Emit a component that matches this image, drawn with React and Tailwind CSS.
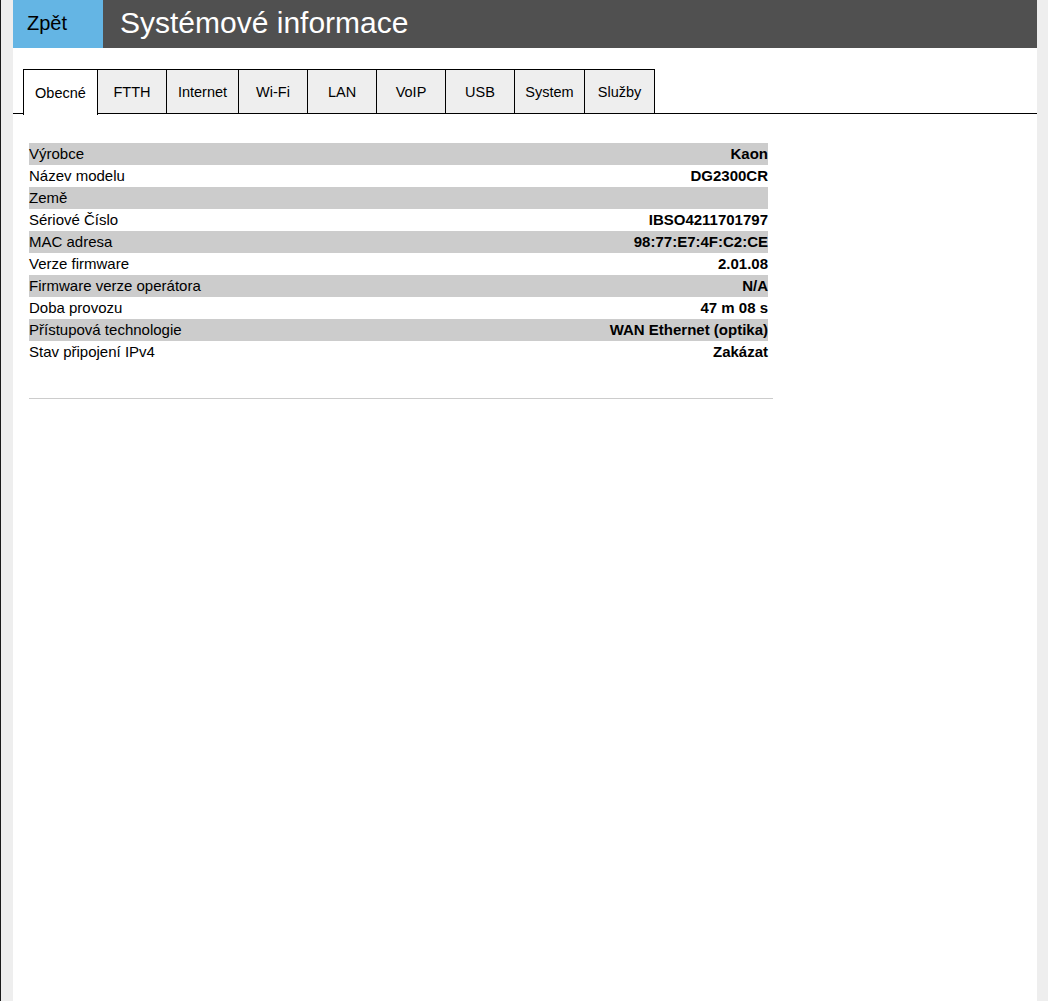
import React from 'react'

const tabs = ['Obecné', 'FTTH', 'Internet', 'Wi-Fi', 'LAN', 'VoIP', 'USB', 'System', 'Služby']
const tabWidths = ['w-[75px]', 'w-[69px]', 'w-[72px]', 'w-[69px]', 'w-[69px]', 'w-[69px]', 'w-[69px]', 'w-[70px]', 'w-[70px]']

const rows = [
  ['Výrobce', 'Kaon'],
  ['Název modelu', 'DG2300CR'],
  ['Země', ''],
  ['Sériové Číslo', 'IBSO4211701797'],
  ['MAC adresa', '98:77:E7:4F:C2:CE'],
  ['Verze firmware', '2.01.08'],
  ['Firmware verze operátora', 'N/A'],
  ['Doba provozu', '47 m 08 s'],
  ['Přístupová technologie', 'WAN Ethernet (optika)'],
  ['Stav připojení IPv4', 'Zakázat'],
]

export default function App() {
  return (
    <div className="flex h-[1001px] w-[1048px] bg-[#eeeeee] font-['Liberation_Sans',Arial,sans-serif] text-black">
      <div className="w-px bg-[#1a1a1a]" />
      <div className="w-[12px]" />
      <div className="flex w-[1024px] flex-col bg-white">
        {/* header */}
        <div className="flex h-[48px]">
          <button className="flex w-[90px] items-center bg-[#64b5e4] pl-[14px] pb-[2px] text-[20px]">Zpět</button>
          <div className="flex flex-1 items-center bg-[#505050] pl-[17px] pb-[3px] text-[30px] text-white">Systémové informace</div>
        </div>

        {/* tabs */}
        <div className="mt-[21px] flex h-[45px] border-b border-black">
          <div className="w-[10px]" />
          {tabs.map((t, i) => (
            <div
              key={t}
              className={`flex ${tabWidths[i]} items-center justify-center border-t border-r border-black pt-[3px] text-[14.5px] ${
                i === 0 ? 'border-l bg-white -mb-px h-[46px]' : 'bg-[#eeeeee]'
              }`}
            >
              {t}
            </div>
          ))}
        </div>

        {/* table */}
        <div className="ml-[16px] mt-[29px] w-[739px] text-[15px]">
          {rows.map(([k, v], i) => (
            <div key={k} className={`flex h-[22px] items-center justify-between ${i % 2 === 0 ? 'bg-[#cccccc]' : ''}`}>
              <span>{k}</span>
              <span className="font-bold">{v}</span>
            </div>
          ))}
        </div>
        <div className="ml-[16px] mt-[35px] h-px w-[744px] bg-[#cccccc]" />
      </div>
    </div>
  )
}
